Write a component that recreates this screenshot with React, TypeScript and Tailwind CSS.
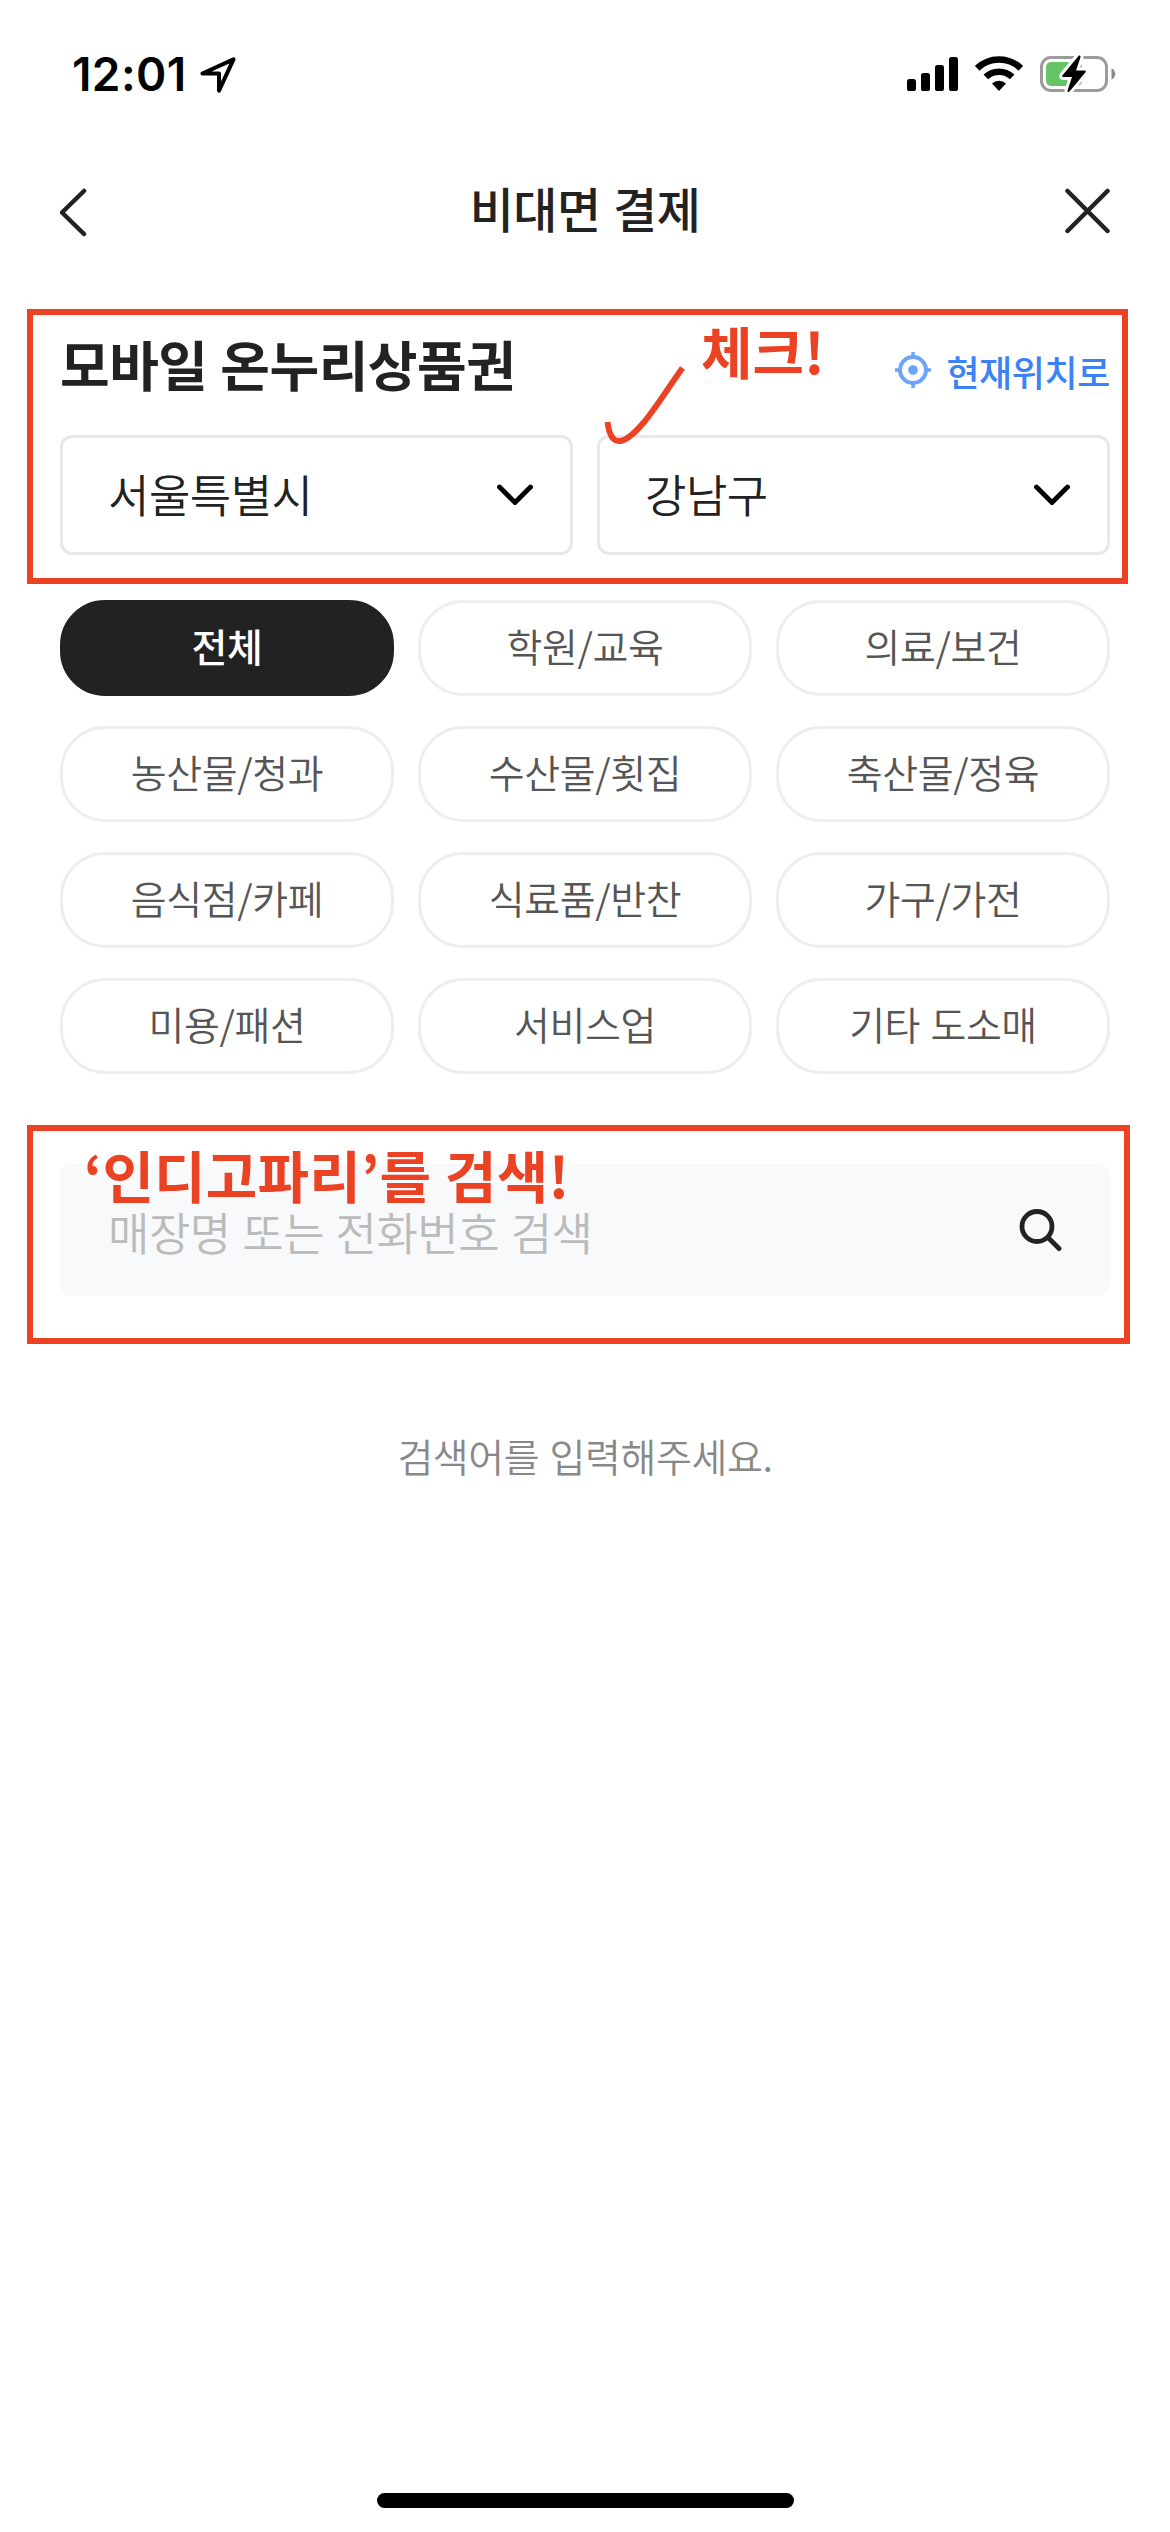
import { useState } from 'react';

const categories = [
  '전체',
  '학원/교육',
  '의료/보건',
  '농산물/청과',
  '수산물/횟집',
  '축산물/정육',
  '음식점/카페',
  '식료품/반찬',
  '가구/가전',
  '미용/패션',
  '서비스업',
  '기타 도소매',
];

const StatusBar = () => (
  <div className="flex h-[141px] items-start justify-between pt-[54px] pl-[72px] pr-[54px]">
    <div className="flex items-center">
      <span className="w-[128px] font-['Inter',sans-serif] text-[46px] leading-[40px] font-semibold tracking-[0.4px] text-black">12:01</span>
      <svg width="36" height="36" viewBox="0 0 36 36" className="mt-[2px]" fill="none" stroke="#000" strokeWidth="4" strokeLinejoin="round">
        <path d="M2.400 16.500 33.500 2.400 19 33.600V16.500Z" />
      </svg>
    </div>
    <div className="flex items-start">
      <svg width="51" height="38" viewBox="0 0 51 38" fill="#000">
        <rect x="0" y="25" width="9" height="12" rx="2.6" />
        <rect x="14" y="19" width="9" height="18" rx="2.6" />
        <rect x="28" y="11" width="9" height="26" rx="2.6" />
        <rect x="42" y="3" width="9" height="34" rx="2.6" />
      </svg>
      <svg width="48" height="38" viewBox="0 0 48 38" className="ml-[17px]" fill="none" stroke="#000" strokeWidth="6.6">
        <path d="M2.2 14.3a31.5 31.5 0 0 1 43.6 0" />
        <path d="M10.8 22.9a19.3 19.3 0 0 1 26.4 0" />
        <path d="M17 29.5a10.4 10.4 0 0 1 14 0L24 37Z" fill="#000" stroke="none" />
      </svg>
      <svg width="77" height="40" viewBox="0 0 77 40" className="ml-[16px]">
        <rect x="2.5" y="3.5" width="65" height="33" rx="9.5" fill="none" stroke="#9b9b9b" strokeWidth="3" />
        <path d="M72.5 14.5c5 1.600 5 9.400 0 11Z" fill="#8c8c8c" />
        <rect x="7" y="8" width="36" height="24" rx="5" fill="#65c466" />
        <path
          d="M39.500 2 23.500 21.200c-.6.900-.2 1.800.8 1.800H33L28.500 36.500c-.4 1.500 1 2 2 .9L46.500 18.200c.6-.9.2-1.700-.8-1.700H37L41.500 3.200c.3-1.400-1-2.200-2-1.200Z"
          fill="#000"
          stroke="#fff"
          strokeWidth="6"
          strokeLinejoin="round"
          paintOrder="stroke"
        />
      </svg>
    </div>
  </div>
);

const Header = () => (
  <header className="flex h-[138px] items-center justify-between px-[60px]">
    <button title="back" className="mt-[3px] w-[45px]">
      <svg width="28" height="50" viewBox="0 0 28 50" fill="none" stroke="#222" strokeWidth="4.500" strokeLinecap="round" strokeLinejoin="round">
        <path d="M24 4 2 25.500 24 47" />
      </svg>
    </button>
    <h1 className="mb-[6px] text-[48px] leading-[60px] font-medium tracking-[-0.5px] [word-spacing:2px]">비대면 결제</h1>
    <button title="close" className="mt-[2px] w-[45px]">
      <svg width="45" height="46" viewBox="0 0 45 46" fill="none" stroke="#222" strokeWidth="4.500" strokeLinecap="round">
        <path d="M2.500 3 42.500 43M42.500 3 2.500 43" />
      </svg>
    </button>
  </header>
);

const RegionSelect = ({ label }: { label: string }) => (
  <button className="flex h-[120px] items-center justify-between rounded-[12px] border-[3px] border-[#e8e8e8] pr-[37px] pl-[45px] text-[45px] leading-[60px] font-[350] tracking-[-0.5px]">
    <span className="mb-[3px]">{label}</span>
    <svg width="36" height="22" viewBox="0 0 36 22" fill="none" stroke="#000" strokeWidth="4.800" strokeLinecap="round" strokeLinejoin="round">
      <path d="M2.500 3 18 18.500 33.500 3" />
    </svg>
  </button>
);

const Annotations = () => (
  <div className="pointer-events-none text-[56px] leading-[64px] font-bold text-[#eb4224]">
    <div className="absolute top-[309px] left-[27px] h-[275px] w-[1101px] border-[6px] border-[#eb4224]" />
    <span className="absolute top-[318px] left-[701px]">체크!</span>
    <svg className="absolute top-[360px] left-[600px]" width="90" height="90" viewBox="0 0 90 90" fill="none" stroke="#eb4224" strokeWidth="6">
      <path d="M7.500 62C11 90 25 85 45 61 60 42 70 25 82.500 8" />
    </svg>
    <div className="absolute top-[1125px] left-[27px] h-[219px] w-[1103px] border-[6px] border-[#eb4224]" />
    <span className="absolute top-[1142px] left-[84px] tracking-[0.2px] whitespace-nowrap [word-spacing:1px]">‘인디고파리’를 검색!</span>
  </div>
);

const App = () => {
  const [selected, setSelected] = useState('전체');
  const [keyword, setKeyword] = useState('');

  return (
    <div className="relative flex h-[2532px] w-[1170px] flex-col overflow-hidden bg-white font-['Noto_Sans_CJK_KR',sans-serif] text-[#222]">
      <StatusBar />
      <Header />

      <main className="flex flex-1 flex-col px-[60px] pt-[51px]">
        <div className="flex h-[105px] items-start justify-between">
          <h2 className="text-[54px] leading-[68px] font-bold tracking-[-0.5px] [word-spacing:1px]">모바일 온누리상품권</h2>
          <button className="mt-[16px] flex items-center text-[36px] leading-[50px] font-medium tracking-[-0.4px] text-[#3b82f6]">
            <svg width="36" height="36" viewBox="0 0 36 36" className="mr-[15px] mb-[3px]" fill="none" stroke="#6ba4fa" strokeWidth="4">
              <circle cx="18" cy="18" r="13" />
              <circle cx="18" cy="18" r="4.800" fill="#6ba4fa" stroke="none" />
              <path d="M18 0v6M18 30v6M0 18h6M30 18h6" strokeWidth="3.500" />
            </svg>
            현재위치로
          </button>
        </div>

        <div className="grid grid-cols-2 gap-6">
          <RegionSelect label="서울특별시" />
          <RegionSelect label="강남구" />
        </div>

        <div className="mt-[45px] grid grid-cols-3 gap-x-6 gap-y-[30px]">
          {categories.map((name) => (
            <button
              key={name}
              onClick={() => setSelected(name)}
              className={`h-24 rounded-[45px] border-[3px] pb-[7px] text-[39px] leading-[60px] tracking-[-0.4px] [word-spacing:2px] ${
                selected === name
                  ? 'border-[#222] bg-[#222] font-medium text-white'
                  : 'border-[#eee] font-[350] text-[#555]'
              }`}
            >
              {name}
            </button>
          ))}
        </div>

        <div className="mt-[90px] flex h-[132px] items-center justify-between rounded-[12px] bg-[#f8f9fb] pr-12 pl-12">
          <input
            title="keyword"
            type="text"
            placeholder="매장명 또는 전화번호 검색"
            value={keyword}
            onChange={(e) => setKeyword(e.target.value)}
            className="mt-[2px] h-[70px] w-[700px] text-[45px] font-[350] tracking-[-0.5px] outline-none [word-spacing:2px] placeholder:text-[#bbb]"
          />
          <svg width="43" height="43" viewBox="0 0 43 43" fill="none" stroke="#222" strokeWidth="4.800" strokeLinecap="round">
            <circle cx="18" cy="17.500" r="15" />
            <path d="M29.500 29 40 39.500" />
          </svg>
        </div>

        <p className="mt-[129px] text-center text-[39px] leading-[60px] font-[350] tracking-[-0.4px] text-[#888] [word-spacing:2px]">
          검색어를 입력해주세요.
        </p>
      </main>

      <div className="mb-6 h-[15px] w-[417px] self-center rounded-full bg-black" />
      <Annotations />
    </div>
  );
};

export default App;
